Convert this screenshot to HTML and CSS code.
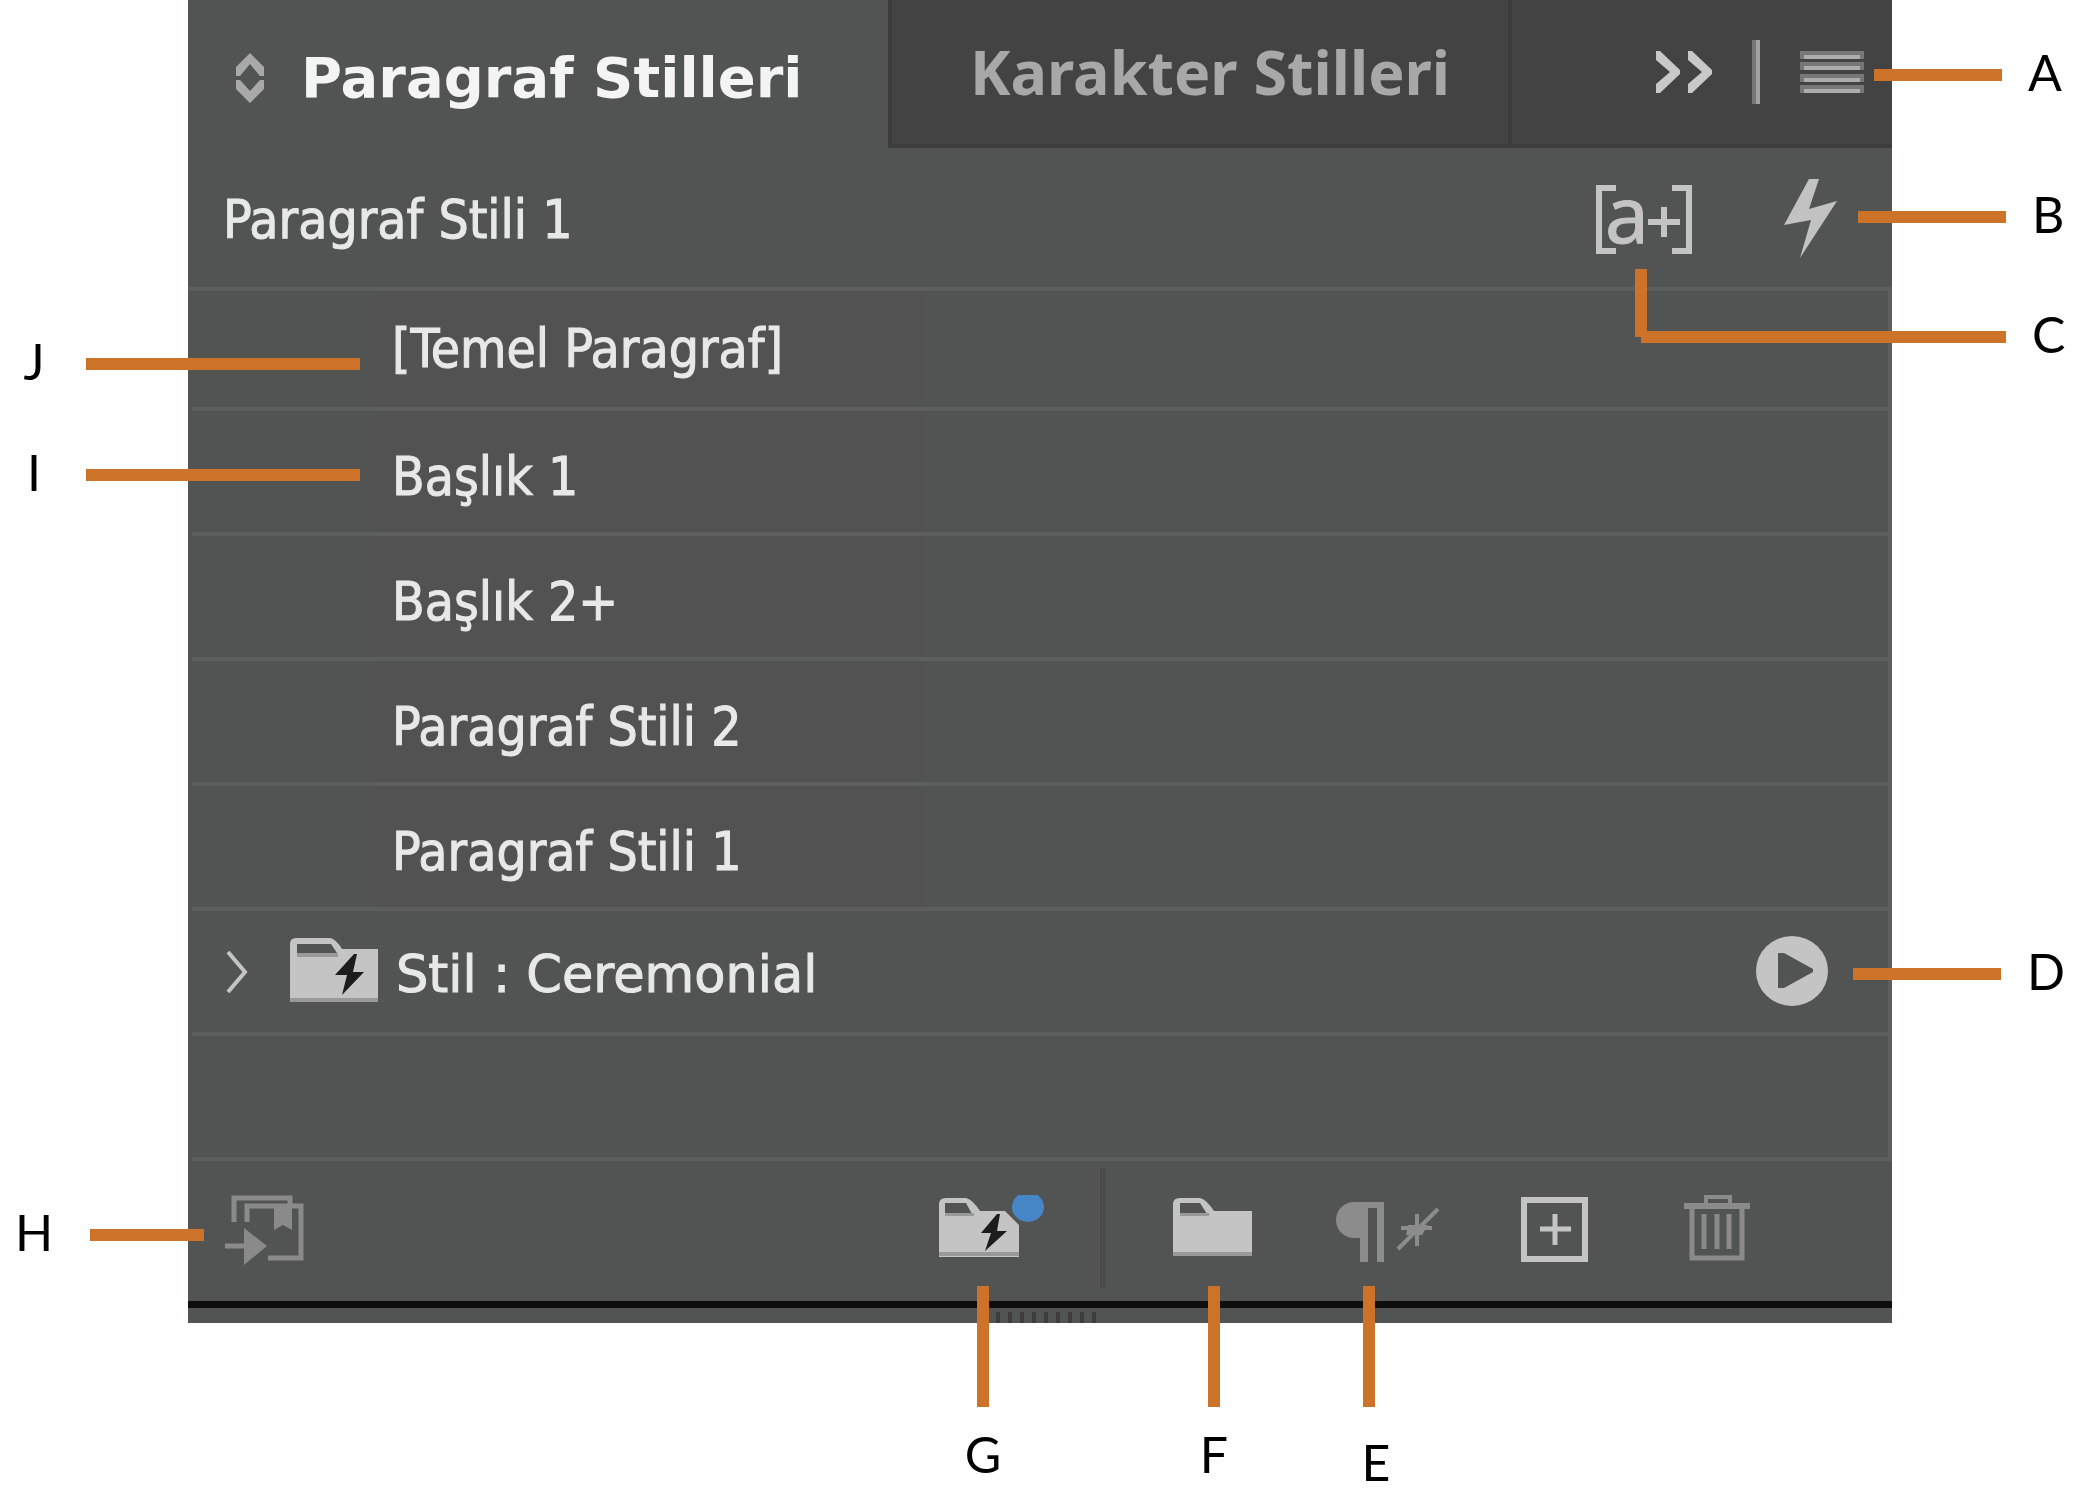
FILE: index.html
```html
<!DOCTYPE html>
<html lang="tr">
<head>
<meta charset="utf-8">
<meta name="viewport" content="width=device-width, initial-scale=1">
<title>Paragraf Stilleri</title>
<link rel="stylesheet" href="styles.css">
</head>
<body>
<main class="figure">
  <section class="panel">
    <header class="tabs">
      <button class="tab tab-active" type="button">
        <svg class="icon" width="28" height="50" viewBox="0 0 28 50" fill="#a9a9a9"><path d="M14 0 28 14V23H24L14 11 4 23H0V14ZM0 27H4L14 38 24 27H28V36L14 50 0 36Z"/></svg>
        <span>Paragraf Stilleri</span>
      </button>
      <button class="tab tab-idle" type="button">Karakter Stilleri</button>
      <div class="tab-tools">
        <button class="tool" type="button" aria-label="Daralt">
          <svg class="icon" width="56" height="42" viewBox="0 0 56 42" fill="#c8c8c8"><path d="M0 0H4L24 19V23L4 42H0V33L14 21 0 9ZM32 0H36L56 19V23L36 42H32V33L46 21 32 9Z"/></svg>
        </button>
        <span class="tool-rule"></span>
        <button class="tool" type="button" aria-label="Panel menüsü">
          <svg class="icon" width="64" height="42" viewBox="0 0 64 42"><path d="M0 4H64M0 15H64M0 27H64M0 38H64" stroke="#777" stroke-width="8"/><path d="M4 6H60M4 17H60M4 29H60M4 40H60" stroke="#acacac" stroke-width="4"/></svg>
        </button>
      </div>
    </header>

    <div class="current">
      <span class="style-text">Paragraf Stili 1</span>
      <div class="current-tools">
        <button class="tool" type="button" aria-label="Geçersiz kılma vurgulayıcı">
          <svg class="icon override" width="96" height="72" viewBox="0 0 96 72" fill="none" stroke="#c4c4c4"><path d="M20 4H3V67H20M76 4H93V67H76" stroke-width="6"/><path d="M52 38H84M68 23V53" stroke-width="6"/><text class="icon-letter" x="9" y="59">a</text></svg>
        </button>
        <button class="tool" type="button" aria-label="Hızlı uygula">
          <svg class="icon" width="60" height="84" viewBox="0 0 60 84" fill="#c2c2c2"><path d="M29 1H39L29 31 57 23 20 80 31 42 4 47Z"/></svg>
        </button>
      </div>
    </div>

    <ul class="list">
      <li class="row row-first"><span class="name style-text">[Temel Paragraf]</span></li>
      <li class="row"><span class="name style-text">Başlık 1</span></li>
      <li class="row"><span class="name style-text">Başlık 2+</span></li>
      <li class="row"><span class="name style-text">Paragraf Stili 2</span></li>
      <li class="row"><span class="name style-text">Paragraf Stili 1</span></li>
      <li class="row row-group">
        <button class="tool" type="button" aria-label="Genişlet">
          <svg class="icon" width="24" height="42" viewBox="0 0 24 42" fill="none" stroke="#c4c4c4" stroke-width="4"><path d="M3 1 20 21 3 41"/></svg>
        </button>
        <svg class="icon folder" width="92" height="72" viewBox="0 0 92 72"><path fill="#c4c4c4" fill-rule="evenodd" d="M2 8Q2 2 8 2H42Q48 3 54 13H90V66H2ZM9 8V17H49L43 8Z"/><path fill="#999" d="M2 62H90V66H2ZM9 17H50V21H9Z"/><path fill="#1c1c1c" d="M66 18 47 39H59L54 59 76 36H65L69 18Z"/></svg>
        <span class="group-name">Stil : Ceremonial</span>
        <button class="tool play" type="button" aria-label="Stil paketini uygula">
          <svg class="icon" width="80" height="76" viewBox="0 0 80 76"><ellipse cx="40" cy="37" rx="36" ry="35" fill="#c4c4c4"/><path d="M26 19H32L61 35V38L32 54H26Z" fill="#525453"/></svg>
        </button>
      </li>
      <li class="row"></li>
    </ul>

    <footer class="bar">
      <button class="tool" type="button" aria-label="Stilleri yükle">
        <svg class="icon" width="80" height="72" viewBox="0 0 80 72" fill="none" stroke="#8a8a8a" stroke-width="5"><path d="M10 27V3H66V10M23 27V11H77V63H44"/><path d="M50 10H68V35L59 30 50 35Z" fill="#8a8a8a" stroke="none"/><path d="M1 51H22"/><path d="M20 33 43 51 20 70Z" fill="#8a8a8a" stroke="none"/></svg>
      </button>
      <div class="bar-right">
        <button class="tool" type="button" aria-label="Yeni stil paketi">
          <svg class="icon" width="108" height="64" viewBox="0 0 108 64"><path fill="#c4c4c4" fill-rule="evenodd" d="M3 9Q3 3 10 3H30Q37 5 44 16H69L83 30V62H3ZM9 8V19H36L30 8Z"/><path fill="#999" d="M3 57H83V61H3ZM9 18H38V21H9Z"/><path fill="#1c1c1c" d="M61 19 45 38H55L49 56 71 36H61L64 19Z"/><ellipse cx="92" cy="12" rx="16" ry="15" fill="#4686c6"/></svg>
        </button>
        <span class="bar-rule"></span>
        <div class="bar-group">
          <button class="tool" type="button" aria-label="Yeni stil grubu">
            <svg class="icon" width="80" height="64" viewBox="0 0 80 64"><path fill="#c4c4c4" fill-rule="evenodd" d="M1 9Q1 3 8 3H28Q35 5 42 16H80V61H1ZM8 8V19H35L28 8Z"/><path fill="#999" d="M1 57H80V61H1ZM8 18H37V21H8Z"/></svg>
          </button>
          <button class="tool" type="button" aria-label="Geçersiz kılmaları temizle">
            <svg class="icon override" width="100" height="68" viewBox="0 0 100 68" fill="#8c8c8c"><path d="M18 7H48V67H41V13H32V67H24V43H18A18 18 0 0 1 18 7Z"/><path d="M62 54 102 14M65 33H96M81 19V51" fill="none" stroke="#8c8c8c" stroke-width="4"/><path d="M72 30H92L86 40H70Z"/></svg>
          </button>
          <button class="tool" type="button" aria-label="Yeni stil oluştur">
            <svg class="icon" width="80" height="70" viewBox="0 0 80 70" fill="none" stroke="#c4c4c4"><path d="M4 5H65V64H4Z" stroke-width="6"/><path d="M20 34H51M35 19V50" stroke-width="5"/></svg>
          </button>
          <button class="tool" type="button" aria-label="Sil">
            <svg class="icon" width="68" height="70" viewBox="0 0 68 70" fill="none" stroke="#8a8a8a"><path d="M22 10V2H46V10" stroke-width="4"/><path d="M0 11H66" stroke-width="6"/><path d="M8 12V63H58V12M20 19V54M33 19V54M45 19V54" stroke-width="5"/></svg>
          </button>
        </div>
      </div>
    </footer>
    <div class="grip"><span class="grip-ticks"></span></div>
  </section>

  <div class="callout at-a"><span class="line line-short"></span><span class="letter">A</span></div>
  <div class="callout at-b"><span class="line line-mid"></span><span class="letter">B</span></div>
  <div class="callout at-c"><span class="line line-elbow"></span><span class="letter">C</span></div>
  <div class="callout at-d"><span class="line line-mid"></span><span class="letter">D</span></div>
  <div class="callout down at-e"><span class="line line-down"></span><span class="letter">E</span></div>
  <div class="callout down at-f"><span class="line line-down"></span><span class="letter">F</span></div>
  <div class="callout down at-g"><span class="line line-down"></span><span class="letter">G</span></div>
  <div class="callout left at-h"><span class="letter">H</span><span class="line line-edge"></span></div>
  <div class="callout left at-i"><span class="letter">I</span><span class="line line-long"></span></div>
  <div class="callout left at-j"><span class="letter">J</span><span class="line line-long"></span></div>
</main>
</body>
</html>
```
FILE: styles.css
```css
* {
  box-sizing: border-box;
}

body {
  margin: 0;
  background: #fff;
}

.figure {
  position: relative;
  padding: 0 189px 171px 188px;
}

.panel {
  background: #525453;
  color: #e8e8e8;
}

button {
  margin: 0;
  padding: 0;
  border: 0;
  background: none;
  color: inherit;
  cursor: pointer;
}

.icon {
  display: block;
  flex: none;
}

.override {
  overflow: visible;
}

.tool {
  flex: none;
}

/* Tab strip */
.tabs {
  display: flex;
  height: 148px;
  background: #434343;
}

.tab {
  display: flex;
  align-items: center;
  white-space: nowrap;
}

.tab-active {
  flex: 0 0 700px;
  gap: 37px;
  padding: 8px 0 0 48px;
  background: #525453;
  color: #f4f4f4;
  font: bold 56px/64px "DejaVu Sans", Verdana, sans-serif;
}

.tab-idle {
  flex: 0 0 624px;
  padding-left: 78px;
  border: solid #3c3c3c;
  border-width: 0 4px 4px;
  color: #a8a8a8;
  font: bold 61px/72px "Noto Sans", "Open Sans", sans-serif;
}

.tab-tools {
  display: flex;
  flex: 1;
  align-items: center;
  justify-content: flex-end;
  gap: 40px;
  padding-right: 28px;
  border-bottom: 4px solid #3c3c3c;
}

.tool-rule {
  width: 8px;
  height: 64px;
  border: solid #777;
  border-width: 0 0 0 4px;
  background: #a2a2a2;
}

/* Current style */
.style-text {
  font: 53px/64px "DejaVu Sans Condensed", "DejaVu Sans", Tahoma, sans-serif;
  -webkit-text-stroke: 1px currentColor;
  white-space: nowrap;
}

.current {
  display: flex;
  align-items: center;
  justify-content: space-between;
  height: 143px;
  padding: 4px 52px 0 35px;
  border-bottom: 4px solid #5d5f5e;
}

.current-tools {
  display: flex;
  align-items: center;
  gap: 88px;
}

.icon-letter {
  fill: #c4c4c4;
  stroke-width: 1px;
  font: 78px "Noto Sans", sans-serif;
}

/* Style list */
.list {
  margin: 0;
  padding: 0 0 0 4px;
  border-right: 4px solid #5d5f5e;
  list-style: none;
}

.row {
  display: flex;
  height: 125px;
  padding-left: 184px;
  border-bottom: 4px solid #5d5f5e;
}

.row-first {
  height: 120px;
}

.name {
  display: flex;
  flex: 0 1 548px;
  align-items: center;
  padding: 10px 0 0 16px;
  background: #535252;
}

.row-first .name {
  padding-top: 0;
}

.row-group {
  align-items: center;
  padding: 0 56px 0 33px;
}

.folder {
  margin: 0 16px 0 39px;
}

.group-name {
  padding-top: 6px;
  font: 51px/64px "DejaVu Sans", Verdana, sans-serif;
  -webkit-text-stroke: 1px currentColor;
  white-space: nowrap;
}

.play {
  margin-left: auto;
}

/* Bottom bar */
.bar {
  display: flex;
  align-items: flex-start;
  justify-content: space-between;
  height: 140px;
  padding: 34px 140px 0 36px;
}

.bar-right,
.bar-group {
  display: flex;
  align-items: flex-start;
}

.bar-group {
  gap: 84px;
}

.bar-rule {
  width: 6px;
  height: 120px;
  margin: -27px 66px 0 56px;
  background: #4c4c4c;
}

.grip {
  display: flex;
  height: 22px;
  padding: 4px 0 0 808px;
  border-top: 7px solid #0e0e0e;
}

.grip-ticks {
  width: 100px;
  background: repeating-linear-gradient(90deg, #3d3d3d 0 4px, transparent 4px 12px);
}

/* Lettered callouts, laid over the panel */
.callout {
  position: absolute;
  display: flex;
  align-items: center;
  gap: 26px;
  color: #000;
}

.letter {
  flex: none;
  width: 44px;
  font: 50px/60px Lato, "Open Sans", sans-serif;
}

.line {
  position: relative;
  flex: none;
  height: 12px;
  margin-top: 6px;
  background: #cc7229;
}

.line-short { width: 128px; }
.line-mid { width: 148px; }
.line-long { width: 274px; }
.line-edge { width: 114px; }
.line-elbow { width: 365px; }

.line-elbow::before {
  content: "";
  position: absolute;
  left: -6px;
  bottom: 6px;
  width: 12px;
  height: 68px;
  background: #cc7229;
}

.left {
  justify-content: space-between;
  left: 12px;
  width: 348px;
}

.left .letter,
.down .letter {
  text-align: center;
}

.down {
  flex-direction: column;
  gap: 17px;
  top: 1286px;
  width: 44px;
}

.line-down {
  width: 12px;
  height: 121px;
  margin: 0;
}

.at-a { top: 42px; right: 9px; }
.at-b { top: 184px; right: 5px; }
.at-c { top: 304px; right: 5px; }
.at-d { top: 941px; right: 10px; }
.at-e { right: 690px; gap: 25px; }
.at-e .letter { padding-left: 14px; }
.at-f { right: 845px; }
.at-g { right: 1076px; }
.at-h { top: 1202px; width: 192px; }
.at-i { top: 442px; }
.at-j { top: 331px; }
```
